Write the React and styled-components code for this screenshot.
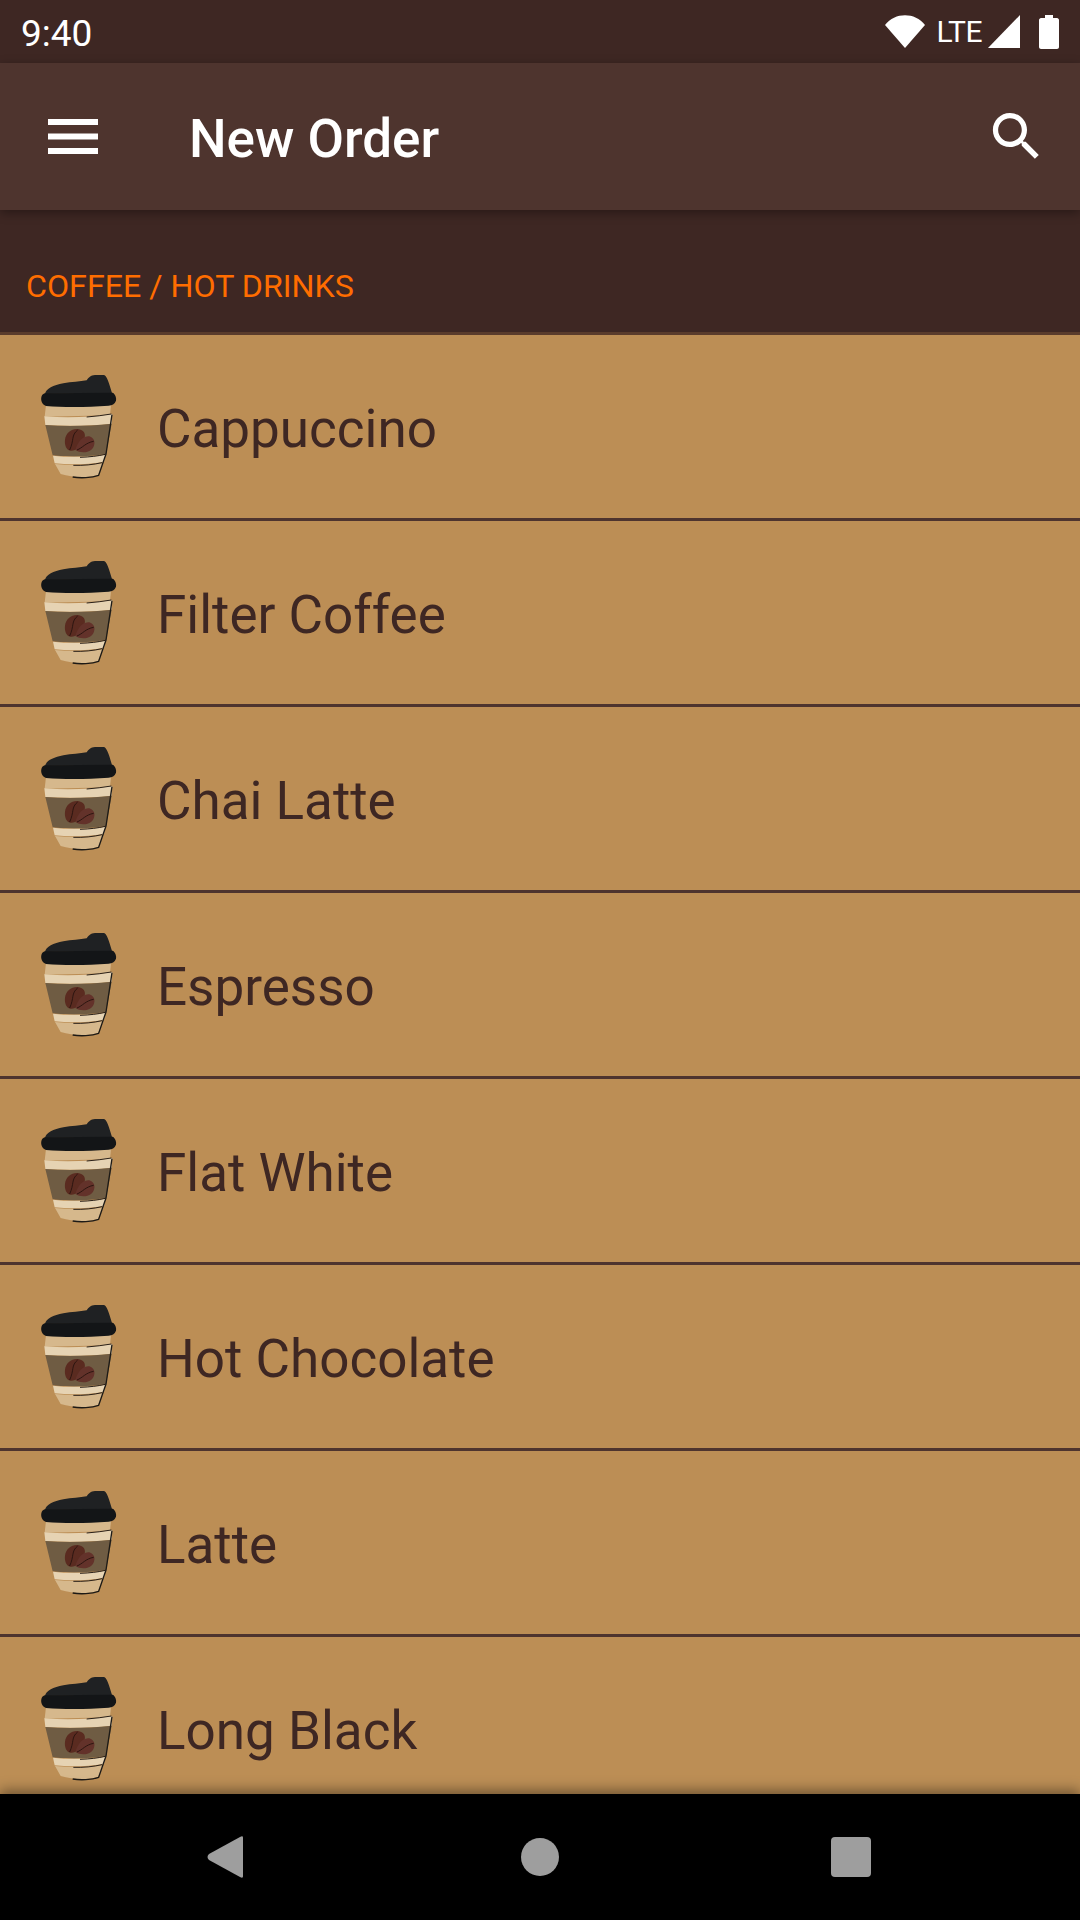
import React from 'react'
import styled, { createGlobalStyle } from 'styled-components'

const GlobalStyle = createGlobalStyle`
  html, body {
    margin: 0;
    padding: 0;
    background: #000;
  }
`

const Screen = styled.div`
  width: 1080px;
  height: 1920px;
  display: flex;
  flex-direction: column;
  overflow: hidden;
  font-family: Roboto, "Noto Sans", sans-serif;
  background: #bc8e55;
`

const StatusBar = styled.div`
  height: 63px;
  flex: none;
  display: flex;
  align-items: center;
  justify-content: space-between;
  padding: 0 21px 0 21px;
  background: #3e2723;
  color: #fff;
`

const Time = styled.span`
  font-size: 37px;
  padding-top: 4px;
`

const StatusIcons = styled.div`
  display: flex;
  align-items: center;
`

const Lte = styled.span`
  font-size: 30px;
  margin: 0 6px 0 11px;
  letter-spacing: -0.5px;
`

const AppBar = styled.header`
  height: 147px;
  flex: none;
  display: flex;
  align-items: center;
  padding: 0 32px 0 48px;
  background: #4e342e;
  box-shadow: 0 3px 10px rgba(0, 0, 0, 0.35);
  position: relative;
  z-index: 1;
`

const Title = styled.h1`
  flex: 1;
  margin: 4px 0 0 91px;
  font-size: 53px;
  font-weight: 500;
  color: #fff;
`

const SectionHeader = styled.div`
  height: 125px;
  flex: none;
  box-sizing: border-box;
  padding: 54px 0 0 26px;
  background: #3e2723;
  border-bottom: 3px solid #5a3c2c;
  color: #ff6d00;
  font-size: 32.2px;
  line-height: 44px;
`

const List = styled.div`
  flex: 1;
  overflow: hidden;
`

const Row = styled.div`
  height: 183px;
  display: flex;
  align-items: center;
  padding-left: 30px;
  border-bottom: 3px solid #4e342e;
  background: #bc8e55;
`

const RowName = styled.span`
  margin-left: 27px;
  padding-top: 5px;
  font-size: 53px;
  color: #3e2723;
`

const NavBar = styled.nav`
  height: 126px;
  flex: none;
  display: flex;
  align-items: center;
  padding-left: 207px;
  background: #000;
  box-shadow: 0 -4px 12px rgba(0, 0, 0, 0.4);
  position: relative;
`

const NavIcon = styled.svg`
  flex: none;
  margin-right: ${(p) => p.$gap || 0}px;
`

const Battery = styled.svg`
  margin-left: 19px;
`

function CupIcon() {
  return (
    <svg width="100" height="120" viewBox="0 7 300 360" aria-hidden="true">
      {/* top of the cup */}
      <path d="M48 120 L243 120 L240 152 L44 156 Z" fill="#d6b88c" />
      {/* upper band */}
      <path d="M43 155 C110 160 180 158 247 148 L245 177 C180 184 110 185 46 181 Z" fill="#e6d3b3" />
      {/* sleeve */}
      <path d="M46 181 C110 186 180 184 245 177 L228 268 C180 276 120 278 68 272 Z" fill="#6f5c43" />
      {/* lower band */}
      <path d="M69 273 C120 279 180 277 226 270 L222 292 C170 300 120 301 74 296 Z" fill="#e6d3b3" />
      {/* bottom */}
      <path d="M75 298 C120 303 170 302 220 295 L205 330 C180 340 130 340 92 328 Z" fill="#d6b88c" />
      {/* outlines */}
      <path d="M246 150 L228 268 L206 332 C185 340 150 341 128 337" fill="none" stroke="#1d1a16" strokeWidth="4" />
      <path d="M150 278 C180 277 205 274 226 269 M130 302 C160 303 190 300 216 294 M170 157 C195 155 220 152 244 148" fill="none" stroke="#2a2018" strokeWidth="3" />
      {/* lid */}
      <path d="M45 88 C48 72 70 62 100 56 C125 52 150 50 170 47 C176 38 182 32 195 31 L222 31 C230 34 236 50 246 85 Z" fill="#1f2123" />
      <path d="M44 86 L248 84 C256 88 260 100 258 108 C254 118 246 122 236 123 C170 128 100 128 48 124 C36 120 32 108 34 98 C35 92 38 88 44 86 Z" fill="#131517" />
      {/* beans */}
      <path d="M105 225 C107 205 127 190 147 194 C167 198 169 215 159 232 C151 248 137 260 121 258 C109 256 103 240 105 225 Z" fill="#5a2b20" />
      <path d="M147 232 C157 216 177 210 187 220 C197 228 195 247 183 256 C171 266 147 264 137 257 C137 248 143 238 147 232 Z" fill="#63322a" />
      <path d="M143 196 C123 212 133 226 119 256 M191 230 C167 234 157 250 141 256" fill="none" stroke="#2c1510" strokeWidth="3" />
    </svg>
  )
}

const drinks = [
  'Cappuccino',
  'Filter Coffee',
  'Chai Latte',
  'Espresso',
  'Flat White',
  'Hot Chocolate',
  'Latte',
  'Long Black',
]

export default function App() {
  return (
    <Screen>
      <GlobalStyle />
      <StatusBar>
        <Time>9:40</Time>
        <StatusIcons>
          <svg width="40" height="34" viewBox="0 0 40 34" aria-hidden="true">
            <path d="M0 10 C10 -3 30 -3 40 10 L20 33 Z" fill="#fff" />
          </svg>
          <Lte>LTE</Lte>
          <svg width="32" height="34" viewBox="0 0 32 34" aria-hidden="true">
            <path d="M32 0 V33 H0 Z" fill="#fff" />
          </svg>
          <Battery width="20" height="34" viewBox="0 0 20 34" aria-hidden="true">
            <path d="M6 0 H14 V3 H18 C19 3 20 4 20 5 V32 C20 33 19 34 18 34 H2 C1 34 0 33 0 32 V5 C0 4 1 3 2 3 H6 Z" fill="#fff" />
          </Battery>
        </StatusIcons>
      </StatusBar>
      <AppBar>
        <svg width="50" height="35" viewBox="0 0 50 35" aria-hidden="true">
          <path d="M0 0 H50 V6 H0 Z M0 14.5 H50 V20.5 H0 Z M0 29 H50 V35 H0 Z" fill="#fff" />
        </svg>
        <Title>New Order</Title>
        <svg width="63" height="63" viewBox="0 0 24 24" aria-hidden="true">
          <path
            fill="#fff"
            d="M15.5 14h-.79l-.28-.27C15.41 12.59 16 11.11 16 9.5 16 5.91 13.09 3 9.5 3S3 5.91 3 9.5 5.91 16 9.5 16c1.61 0 3.09-.59 4.23-1.57l.27.28v.79l5 4.99L20.49 19l-4.99-5zm-6 0C7.01 14 5 11.99 5 9.5S7.01 5 9.5 5 14 7.01 14 9.5 11.99 14 9.5 14z"
          />
        </svg>
      </AppBar>
      <SectionHeader>COFFEE / HOT DRINKS</SectionHeader>
      <List>
        {drinks.map((name) => (
          <Row key={name}>
            <CupIcon />
            <RowName>{name}</RowName>
          </Row>
        ))}
      </List>
      <NavBar>
        <NavIcon $gap={278} width="36" height="42" viewBox="0 0 36 42" aria-hidden="true">
          <path d="M36 2 V40 C36 42 35 42 33 41 L2 24 C0 22 0 20 2 18 L33 1 C35 0 36 0 36 2 Z" fill="#9e9e9e" />
        </NavIcon>
        <NavIcon $gap={272} width="38" height="38" viewBox="0 0 38 38" aria-hidden="true">
          <circle cx="19" cy="19" r="19" fill="#9e9e9e" />
        </NavIcon>
        <NavIcon width="40" height="40" viewBox="0 0 40 40" aria-hidden="true">
          <rect width="40" height="40" rx="4" fill="#9e9e9e" />
        </NavIcon>
      </NavBar>
    </Screen>
  )
}
